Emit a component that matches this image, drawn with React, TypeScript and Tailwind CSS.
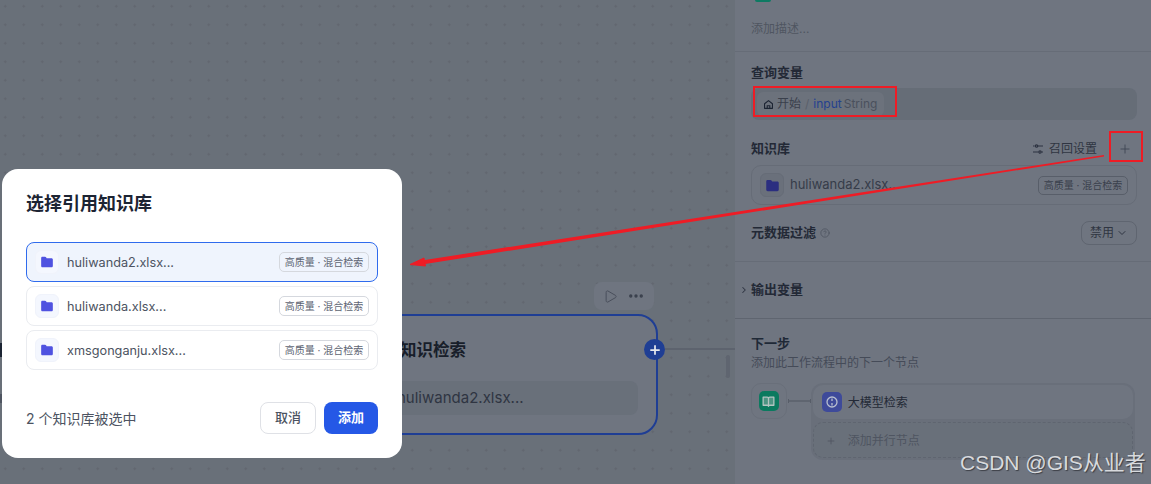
import React from "react";
import { Play, MoreHorizontal, Plus, ChevronDown, ChevronRight, HelpCircle } from "lucide-react";

const FONT = "[font-family:Inter,'Noto_Sans_CJK_SC',sans-serif]";

function Folder({ className }: { className: string }) {
  return (
    <svg viewBox="0 0 12 12" className={className} fill="currentColor">
      <path d="M1 2.600C1 1.900 1.500 1.500 2.100 1.500h2.200c.4 0 .7.200.9.500l.5.800h4.200c.6 0 1.100.5 1.100 1.100v5.500c0 .6-.5 1.100-1.100 1.100H2.100C1.500 10.500 1 10 1 9.400z" />
    </svg>
  );
}

function HomeIcon() {
  return (
    <svg viewBox="0 0 12 12" className="w-[11px] h-[11px] text-[#1c2433]" fill="none" stroke="currentColor" strokeWidth="1.200">
      <path d="M1.700 5.200 6 1.800l4.300 3.400v5H1.700z" strokeLinejoin="round" />
      <path d="M4.600 10.200V7.300h2.800v2.900" />
    </svg>
  );
}

function Badge({ dim }: { dim?: boolean }) {
  return (
    <span
      className={
        dim
          ? "flex items-center justify-center w-[90px] h-[19px] rounded-[5px] border border-[#585e69] text-[10px] text-[#3a404c] shrink-0"
          : "flex items-center justify-center w-[90px] h-[20px] rounded-[5px] border border-[#d5d8de] text-[10px] text-[#5d6472] shrink-0"
      }
    >
      高质量 · 混合检索
    </span>
  );
}

function KbRow({ name, selected }: { name: string; selected?: boolean }) {
  return (
    <div
      className={
        selected
          ? "flex items-center h-10 pl-[8px] pr-[8px] rounded-lg border border-[#2f6bed] bg-[#eff4fd]"
          : "flex items-center h-10 pl-[8px] pr-[8px] rounded-lg border border-[#eaecf0] bg-white"
      }
    >
      <span className="flex items-center justify-center w-6 h-6 rounded-md bg-[#f4f7fe] border border-[#f0f3fb]">
        <Folder className="w-[14px] h-[14px] text-[#4f52e0]" />
      </span>
      <span className="ml-[8px] flex-1 pt-[1px] text-[12.700px] text-[#4c5361]">{name}</span>
      <Badge />
    </div>
  );
}

function Annotations() {
  return (
    <svg className="absolute inset-0 pointer-events-none" width="1151" height="484" viewBox="0 0 1151 484" fill="none">
      <rect x="754" y="87" width="142" height="29" stroke="#ee1c25" strokeWidth="2" />
      <rect x="1110" y="132" width="32" height="29" stroke="#ee1c25" strokeWidth="2" />
      <path d="M1104 155 L1104 156.500 L422 264.500 L421.500 260.500 Z" fill="#ee1c25" />
      <path d="M410 264.500 L424 258 L424.500 261.500 L425.500 266 Z" fill="#ee1c25" stroke="#ee1c25" strokeWidth="1" />
    </svg>
  );
}

function Canvas() {
  return (
    <div className="relative w-[735px] h-full overflow-hidden bg-[#697079] bg-[radial-gradient(circle,#62666f_1px,transparent_1.300px)] bg-[length:18.500px_18.500px] bg-[position:-4px_-3px]">
      <div className="absolute left-[594px] top-[282px] flex items-center gap-[9px] w-[60px] h-[28px] pl-[9px] rounded-lg bg-[#6f7580]">
        <Play className="w-[15px] h-[15px] text-[#464c59]" strokeWidth={1.500} />
        <MoreHorizontal className="w-[18px] h-[18px] text-[#3a404c]" strokeWidth={2.500} />
      </div>
      <div className="absolute left-[370px] top-[314px] w-[288px] h-[121px] rounded-[20px] border-[2.500px] border-[#1f3e94] bg-[#6f7580]">
        <div className="absolute left-[28px] top-[22px] text-[16.500px] leading-[24px] font-semibold text-[#181e2a]">知识检索</div>
        <div className="absolute left-[16px] top-[65px] w-[250px] h-[34px] rounded-lg bg-[#69707a] pl-[9px] text-[15px] leading-[34px] text-[#2f3542]">huliwanda2.xlsx...</div>
      </div>
      <div className="absolute left-[644px] top-[339px] flex items-center justify-center w-[21px] h-[21px] rounded-full bg-[#1f3e94]">
        <Plus className="w-[14px] h-[14px] text-[#e6e8ee]" strokeWidth={3} />
      </div>
      <div className="absolute left-[665px] top-[348px] w-[70px] h-[2px] bg-[#5d636e]" />
      <div className="absolute left-[726px] top-[355px] w-[4px] h-[23px] rounded-sm bg-[#5f6570]" />
      <div className="absolute left-0 top-[343px] w-[2px] h-[14px] bg-[#1c2433]" />
      <div className="absolute left-0 top-[394px] w-[2px] h-[9px] bg-[#4f5561]" />
    </div>
  );
}

function Panel() {
  return (
    <div className="flex flex-col w-[416px] h-full overflow-hidden bg-[#6f7580] pl-0">
      <div className="ml-[20px] w-4 h-[2px] rounded-b-sm bg-[#0e7a63]" />
      <div className="h-[50px] border-b border-[#666c77] pl-[16px] pt-[18px] text-[12px] leading-[18px] text-[#4f5561]">添加描述...</div>

      <div className="px-[16px] pt-[11px]">
        <div className="text-[13px] leading-[18px] font-semibold text-[#232936]">查询变量</div>
        <div className="mt-[7px] flex items-center h-8 w-[386px] rounded-lg bg-[#666d77] pl-[6px]">
          <div className="flex items-center h-6 w-[127px] rounded-md bg-[#6c727c] pl-[6px] text-[12px]">
            <HomeIcon />
            <span className="ml-[3px] text-[#3a404c]">开始</span>
            <span className="mx-[4px] text-[#5a606b]">/</span>
            <span className="text-[#24418f]">input</span>
            <span className="ml-[2px] text-[#4a505c]">String</span>
          </div>
        </div>
      </div>

      <div className="px-[16px] pt-[19px]">
        <div className="flex items-center h-5 w-[386px]">
          <span className="text-[13px] font-semibold text-[#232936]">知识库</span>
          <svg viewBox="0 0 12 12" className="ml-auto w-[12px] h-[12px] text-[#2c3240]" fill="none" stroke="currentColor" strokeWidth="1.200">
            <path d="M1 3h1.500M6 3h5M1 9h5M9.500 9H11" />
            <circle cx="4.500" cy="3" r="1.200" />
            <circle cx="8" cy="9" r="1.200" />
          </svg>
          <span className="ml-[5px] text-[12px] text-[#2f3542]">召回设置</span>
          <Plus className="ml-[21px] mr-[5px] w-[14px] h-[14px] text-[#3f4552]" strokeWidth={1.500} />
        </div>
        <div className="mt-[6px] flex items-center w-[386px] h-10 rounded-[10px] border border-[#666c77] pl-[8px] pr-[8px]">
          <span className="flex items-center justify-center w-6 h-6 rounded-md bg-[#6a707b] border border-[#666c77]">
            <Folder className="w-[15px] h-[15px] text-[#2b2e80]" />
          </span>
          <span className="ml-[6px] flex-1 text-[13px] text-[#363c49]">huliwanda2.xlsx...</span>
          <Badge dim />
        </div>
      </div>

      <div className="flex items-center h-[24px] mt-[16px] pl-[16px] w-[402px]">
        <span className="text-[13px] font-semibold text-[#232936]">元数据过滤</span>
        <HelpCircle className="ml-[4px] w-[10px] h-[10px] text-[#4f5561]" />
        <div className="ml-auto flex items-center justify-center gap-[2px] w-[56px] h-6 rounded-lg border border-[#5f6570] text-[12px] text-[#2f3542]">
          禁用
          <ChevronDown className="w-3 h-3" />
        </div>
      </div>
      <div className="mt-[16px] h-px bg-[#666c77]" />

      <div className="flex items-center h-[57px] border-b border-[#5f6570] pl-[4px]">
        <ChevronRight className="w-[10px] h-[10px] text-[#2f3542]" strokeWidth={2.500} />
        <span className="ml-[2px] text-[13px] font-semibold text-[#232936]">输出变量</span>
      </div>

      <div className="px-[16px] pt-[15px]">
        <div className="text-[13px] leading-[18px] font-semibold text-[#1f2937]">下一步</div>
        <div className="mt-[2px] text-[12px] leading-[18px] text-[#454b58]">添加此工作流程中的下一个节点</div>
        <div className="mt-[11px] flex items-start">
          <div className="flex items-center justify-center w-9 h-9 rounded-[10px] border border-[#696f7a]">
            <span className="flex items-center justify-center w-5 h-5 rounded-[5px] bg-[#0b7a5f]">
              <svg viewBox="0 0 14 14" className="w-[15px] h-[15px]" fill="#4d9483" stroke="#b4c4c2" strokeWidth="1.200">
                <path d="M2 3h3.800c.7 0 1.200.5 1.200 1.200V11.500c0-.6-.5-1-1.200-1H2zM12 3H8.200C7.500 3 7 3.500 7 4.200V11.500c0-.6.5-1 1.200-1H12z" strokeLinejoin="round" />
              </svg>
            </span>
          </div>
          <div className="relative mt-[17px] ml-[1px] w-[23px] h-[1.500px] bg-[#5f6570]">
            <div className="absolute left-0 top-[-1px] w-px h-[4px] bg-[#575d68]" />
            <div className="absolute right-0 top-[-1px] w-px h-[4px] bg-[#575d68]" />
          </div>
          <div className="flex flex-col gap-[3px] w-[326px] h-[77px] rounded-xl bg-[#696f7a] p-[2px]">
            <div className="flex items-center h-[34px] rounded-[10px] bg-[#6f7580] pl-[9px]">
              <span className="flex items-center justify-center w-5 h-5 rounded-[5px] bg-[#3e4a9a]">
                <svg viewBox="0 0 14 14" className="w-[14px] h-[14px]" fill="none" stroke="#b8bfd0" strokeWidth="1.300">
                  <circle cx="7" cy="7" r="5" />
                  <path d="M7 3.500v2.500M7 8v2.500" />
                </svg>
              </span>
              <span className="ml-[6px] pt-[1px] text-[12px] text-[#232936]">大模型检索</span>
            </div>
            <div className="flex items-center h-[36px] rounded-[10px] border border-dashed border-[#5f6570] bg-[#69707a] pl-[12px] pt-[1px]">
              <Plus className="w-[10px] h-[10px] text-[#4f5561]" strokeWidth={2} />
              <span className="ml-[12px] text-[12px] text-[#4f5561]">添加并行节点</span>
            </div>
          </div>
        </div>
      </div>
    </div>
  );
}

function Modal() {
  return (
    <div className="absolute left-[2px] top-[169px] w-[400px] h-[289px] rounded-[16px] bg-white px-[24px]">
      <div className="pt-[22px] text-[18px] leading-[26px] font-semibold text-[#1c2433]">选择引用知识库</div>
      <div className="mt-[25px] flex flex-col gap-[4px]">
        <KbRow name="huliwanda2.xlsx..." selected />
        <KbRow name="huliwanda.xlsx..." />
        <KbRow name="xmsgonganju.xlsx..." />
      </div>
      <div className="mt-[32px] flex items-center h-8">
        <span className="text-[14px] text-[#4c5361]">2 个知识库被选中</span>
        <button className="ml-auto w-[56px] h-8 rounded-lg border border-[#dfe1e6] bg-white text-[13px] font-medium text-[#4c5361]">取消</button>
        <button className="ml-[8px] w-[54px] h-8 rounded-lg bg-[#2558e6] text-[13px] font-semibold text-white">添加</button>
      </div>
    </div>
  );
}

export default function App() {
  return (
    <div className={`relative flex w-[1151px] h-[484px] overflow-hidden ${FONT}`}>
      <Canvas />
      <Panel />
      <Modal />
      <Annotations />
      <div className="absolute left-[960px] top-[449px] text-[21px] leading-[28px] text-[#d8dadd] [font-family:'Liberation_Sans','Noto_Sans_CJK_SC',sans-serif] [text-shadow:1px_1px_1px_#3c3f46]">
        CSDN @GIS从业者
      </div>
    </div>
  );
}
